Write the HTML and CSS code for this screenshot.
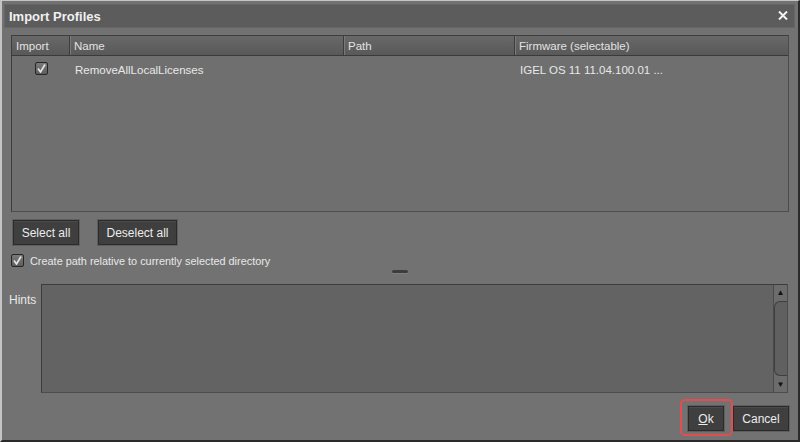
FILE: index.html
```html
<!DOCTYPE html>
<html lang="en">
<head>
  <meta charset="UTF-8" />
  <title>Import Profiles</title>
  <link rel="stylesheet" href="styles.css">
</head>
<body>
  <div class="window">
    <div class="titlebar">
      <span class="title">Import Profiles</span>
      <svg class="close" width="10" height="9" viewBox="0 0 10 9">
        <path d="M1 0.5 L9 8.5 M9 0.5 L1 8.5" stroke="#f2f2f2" stroke-width="2" />
      </svg>
    </div>

    <div class="content">
      <div class="table">
        <div class="thead">
          <div class="cell">Import</div>
          <div class="cell">Name</div>
          <div class="cell">Path</div>
          <div class="cell last">Firmware (selectable)</div>
        </div>
        <div class="row">
          <div class="cell center">
            <span class="checkbox">
              <svg width="9" height="9" viewBox="0 0 9 9"><path d="M1 4.5 L3.5 8 L8 0.5" fill="none" stroke="#e4e4e4" stroke-width="1.7" /></svg>
            </span>
          </div>
          <div class="cell">RemoveAllLocalLicenses</div>
          <div class="cell"></div>
          <div class="cell last">IGEL OS 11 11.04.100.01 ...</div>
        </div>
      </div>

      <div class="actions">
        <button class="btn select">Select all</button>
        <button class="btn deselect">Deselect all</button>
      </div>

      <label class="check-row">
        <span class="checkbox">
          <svg width="9" height="9" viewBox="0 0 9 9"><path d="M1 4.5 L3.5 8 L8 0.5" fill="none" stroke="#e4e4e4" stroke-width="1.7" /></svg>
        </span>
        Create path relative to currently selected directory
      </label>

      <div class="splitter"><span class="grip"></span></div>

      <div class="hints">
        <span class="hints-label">Hints</span>
        <div class="hints-box">
          <div class="scrollbar">
            <span class="arrow up">&#9650;</span>
            <span class="thumb"></span>
            <span class="arrow down">&#9660;</span>
          </div>
        </div>
      </div>

      <div class="footer">
        <span class="focus-ring"><button class="btn ok"><u>O</u>k</button></span>
        <button class="btn cancel">Cancel</button>
      </div>
    </div>
  </div>
</body>
</html>
```

FILE: styles.css
```css
* {
  margin: 0;
  padding: 0;
  box-sizing: border-box;
}

body {
  width: 800px;
  height: 442px;
  overflow: hidden;
  background: #2b2b2b;
  font-family: "Liberation Sans", Arial, sans-serif;
  font-size: 11.5px;
  color: #e8e8e8;
}

.window {
  width: 800px;
  height: 442px;
  background: #727272;
  border-top: 1px solid #c4c4c4;
  border-left: 2px solid #c4c4c4;
  border-right: 2px solid #2a2a2a;
  border-bottom: 2px solid #2a2a2a;
  padding: 3px 3px 0 2px;
  display: flex;
  flex-direction: column;
}

.titlebar {
  height: 24px;
  background: #5c5c5c;
  border: 1px solid #666;
  display: flex;
  align-items: center;
  justify-content: space-between;
  padding: 0 6px 0 4px;
}

.title {
  font-size: 13px;
  font-weight: bold;
  color: #f0f0f0;
}

.close {
  display: block;
  margin-top: -1px;
}

.content {
  padding: 7px 6px 0 7px;
  display: flex;
  flex-direction: column;
}

.table {
  height: 177px;
  border: 1px solid #3e3e3e;
  border-right-color: #4a4a4a;
  border-bottom-color: #4e4e4e;
  background: #6f6f6f;
}

.thead,
.row {
  display: grid;
  grid-template-columns: 58px 274px 171px 1fr;
}

.thead {
  height: 20px;
  background: linear-gradient(#686868, #595959);
  border-bottom: 1px solid #3a3a3a;
}

.thead .cell {
  border-right: 1px solid #3c3c3c;
  box-shadow: inset 1px 0 0 #7a7a7a;
  padding: 0 4px;
  display: flex;
  align-items: center;
  color: #e2e2e2;
}

.thead .cell:first-child {
  box-shadow: none;
}

.thead .cell.last {
  border-right: none;
}

.row {
  height: 25px;
}

.row .cell {
  padding: 0 5px;
  display: flex;
  align-items: center;
  padding-top: 2px;
}

.row .cell.center {
  justify-content: center;
  padding-top: 0;
}

.checkbox {
  width: 13px;
  height: 13px;
  border: 1px solid #262626;
  border-radius: 2px;
  background: linear-gradient(#7a7a7a, #5e5e5e);
  display: inline-flex;
  align-items: center;
  justify-content: center;
}

.btn {
  height: 25px;
  background: #3f3f3f;
  border: 1px solid #2b2b2b;
  box-shadow: 0 0 0 1px #5e5e5e, inset 0 1px 0 #4a4a4a;
  color: #ececec;
  font-family: "Liberation Sans", Arial, sans-serif;
  font-size: 12px;
}

.actions {
  display: flex;
  gap: 19px;
  margin-top: 8px;
  padding-left: 2px;
}

.select {
  width: 66px;
}

.deselect {
  width: 79px;
}

.check-row {
  display: flex;
  align-items: center;
  gap: 6px;
  height: 13px;
  margin-top: 9px;
  font-size: 10.9px;
}

.splitter {
  height: 17px;
  display: flex;
  justify-content: center;
  padding-top: 3px;
}

.grip {
  width: 16px;
  height: 3px;
  border-radius: 2px;
  background: #3c3c3c;
  box-shadow: 0 1px 0 #7e7e7e;
}

.hints {
  display: flex;
  margin-left: -2px;
  margin-right: 1px;
}

.hints-label {
  width: 32px;
  padding-top: 9px;
  font-size: 12px;
}

.hints-box {
  flex: 1;
  height: 109px;
  background: #636363;
  border: 1px solid #3c3c3c;
  border-right-color: #4c4c4c;
  border-bottom-color: #4c4c4c;
  display: flex;
  justify-content: flex-end;
}

.scrollbar {
  width: 14px;
  display: flex;
  flex-direction: column;
  background: #6c6c6c;
  border-left: 1px solid #4a4a4a;
}

.arrow {
  height: 15px;
  font-size: 8px;
  color: #101010;
  display: flex;
  align-items: center;
  justify-content: center;
}

.thumb {
  flex: 1;
  margin: 1px 0;
  border: 1px solid #3e3e3e;
  border-right: none;
  border-radius: 6px 0 0 6px;
  background: #606060;
}

.footer {
  display: flex;
  justify-content: flex-end;
  gap: 9px;
  margin-top: 13px;
}

.focus-ring {
  position: relative;
  display: flex;
}

.focus-ring::after {
  content: "";
  position: absolute;
  top: -7px;
  left: -8px;
  right: -9px;
  bottom: -5px;
  border: 2px solid #e44c50;
  border-radius: 5px;
}

.ok {
  width: 36px;
}

.cancel {
  width: 56px;
}
```
